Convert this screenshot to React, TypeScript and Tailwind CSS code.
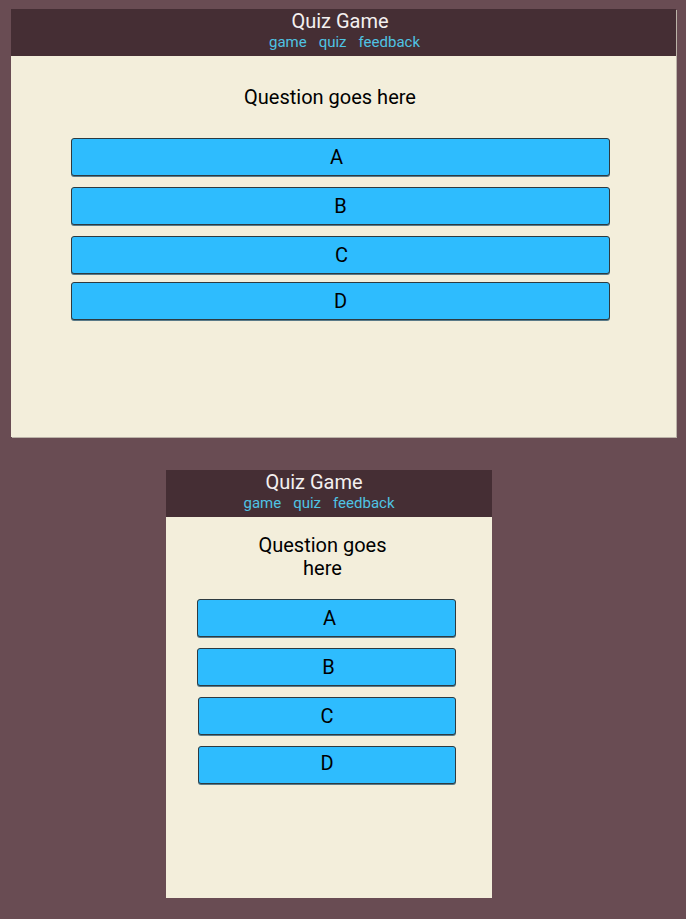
import React from "react";

const font = { fontFamily: "Roboto, 'Noto Sans', sans-serif" };

function Header({ titleCls, linksCls }: { titleCls: string; linksCls: string }) {
  return (
    <div className="h-[47px] bg-[#452e34] flex flex-col items-center">
      <div className={`text-[20px] leading-[24px] text-[#f4f0f0] ${titleCls}`}>Quiz Game</div>
      <div className={`text-[15px] leading-[18px] text-[#4fc3e3] whitespace-nowrap ${linksCls}`}>
        <span>game</span>
        <span className="ml-[12px]">quiz</span>
        <span className="ml-[12px]">feedback</span>
      </div>
    </div>
  );
}

function Btn({ label, cls, textCls = "" }: { label: string; cls: string; textCls?: string }) {
  return (
    <div
      className={`h-[38px] bg-[#2ebcfe] border border-[#2d3a40] rounded-[3px] flex items-center justify-center text-[20px] text-black shadow-[0_1px_0_#5a7a88] ${cls}`}
    >
      <span className={textCls}>{label}</span>
    </div>
  );
}

export default function App() {
  return (
    <div className="min-h-[919px] w-[686px] bg-[#694c53] pt-[9px]" style={font}>
      <div className="ml-[11px] w-[665px] h-[428px] bg-[#f3eedb] shadow-[1px_1px_0_#bbb3a8]">
        <Header titleCls="mr-[7px]" linksCls="ml-[2px]" />
        <div className="mt-[30px] pr-[27px] text-center text-[20px] leading-[23px] text-black whitespace-nowrap">
          Question goes here
        </div>
        <div className="mt-[29px] ml-[60px] w-[539px]">
          <Btn label="A" cls="" textCls="mr-[8px]" />
          <Btn label="B" cls="mt-[11px]" />
          <Btn label="C" cls="mt-[11px]" textCls="ml-[2px]" />
          <Btn label="D" cls="mt-[8px]" />
        </div>
      </div>
      <div className="mt-[33px] ml-[166px] w-[326px] h-[428px] bg-[#f3eedb]">
        <Header titleCls="mr-[30px]" linksCls="mr-[20px]" />
        <div className="mt-[17px] text-center text-[20px] leading-[23px] text-black pl-[73px] pr-[86px]">
          Question goes here
        </div>
        <div className="mt-[19px] ml-[31px] w-[259px]">
          <Btn label="A" cls="" textCls="ml-[6px]" />
          <Btn label="B" cls="mt-[11px]" textCls="ml-[4px]" />
          <Btn label="C" cls="mt-[11px] ml-[1px]" />
          <Btn label="D" cls="mt-[11px] ml-[1px]" textCls="mb-[5px]" />
        </div>
      </div>
    </div>
  );
}
